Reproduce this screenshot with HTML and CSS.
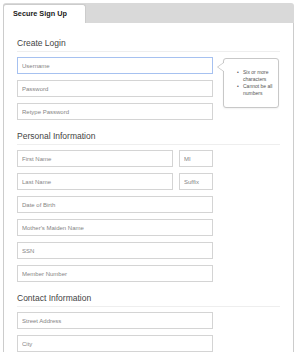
FILE: index.html
```html
<!DOCTYPE html>
<html lang="en">
<head>
    <meta charset="UTF-8">
    <meta name="viewport" content="width=device-width, initial-scale=1.0">
    <title>Secure Sign Up</title>
    <link rel="stylesheet" href="styles.css">
</head>
<body>
    <div class="signup">
        <div class="tabbar">
            <div class="tab">Secure Sign Up</div>
        </div>
        <form class="panel">
            <section class="group">
                <h2>Create Login</h2>
                <div class="field">
                    <input type="text" class="focused" placeholder="Username">
                    <div class="hint">
                        <ul>
                            <li>Six or more characters</li>
                            <li>Cannot be all numbers</li>
                        </ul>
                    </div>
                </div>
                <input type="password" placeholder="Password">
                <input type="password" placeholder="Retype Password">
            </section>

            <section class="group">
                <h2>Personal Information</h2>
                <div class="row">
                    <input type="text" placeholder="First Name">
                    <input type="text" class="short" placeholder="MI">
                </div>
                <div class="row">
                    <input type="text" placeholder="Last Name">
                    <input type="text" class="short" placeholder="Suffix">
                </div>
                <input type="text" placeholder="Date of Birth">
                <input type="text" placeholder="Mother's Maiden Name">
                <input type="text" placeholder="SSN">
                <input type="text" placeholder="Member Number">
            </section>

            <section class="group">
                <h2>Contact Information</h2>
                <input type="text" placeholder="Street Address">
                <input type="text" placeholder="City">
            </section>
        </form>
    </div>
</body>
</html>
```

FILE: styles.css
```css
* {
    box-sizing: border-box;
}
html, body {
    overflow: hidden;
}
body {
    font-family: 'Liberation Sans', Arial, sans-serif;
    background: #fff;
    margin: 0;
}
.signup {
    width: 291px;
    margin: 3px 0 0 3px;
}
.tabbar {
    display: flex;
    height: 20px;
    padding-top: 1px;
    background: #d9d9d9;
    border-radius: 3px 3px 0 0;
}
.tab {
    width: 83px;
    background: #fff;
    border: 1px solid #cccccc;
    border-bottom: none;
    border-radius: 3px 3px 0 0;
    padding-left: 9px;
    font-size: 7.3px;
    font-weight: 700;
    line-height: 18px;
    color: #1a1a1a;
}
.panel {
    border: 1px solid #cccccc;
    border-top: none;
    padding: 4px 13px 20px 13px;
    margin: 0;
}
.group h2 {
    margin: 10px 0 5px 0;
    padding-bottom: 2px;
    border-bottom: 1px solid #eeeeee;
    font-size: 8.5px;
    font-weight: 400;
    line-height: 12px;
    color: #444;
}
.group input {
    display: block;
    width: 196px;
    height: 17px;
    margin: 0 0 6px 0;
    padding: 0 4px;
    border: 1px solid #d4d4d4;
    border-radius: 0;
    background: #fff;
    font-family: inherit;
    font-size: 6px;
    color: #333;
    outline: none;
}
.group input::placeholder {
    color: #858585;
}
.group input.focused {
    border-color: #a6c1f0;
}
.field {
    position: relative;
}
.row {
    display: flex;
    gap: 6px;
    width: 196px;
}
.row input {
    flex: 1;
    width: auto;
    min-width: 0;
}
.row input.short {
    flex: none;
    width: 34px;
}
.hint {
    position: absolute;
    left: 206px;
    top: 1px;
    width: 56px;
    padding: 10px 2px 10px 13px;
    background: #fff;
    border: 1px solid #c8c8c8;
    border-radius: 3px;
    box-shadow: 0 1px 2px rgba(0,0,0,0.06);
}
.hint::before,
.hint::after {
    content: "";
    position: absolute;
    top: 3px;
    width: 0;
    height: 0;
    border-style: solid;
    border-width: 5px 7px 5px 0;
}
.hint::before {
    left: -7px;
    border-color: transparent #c0c0c0 transparent transparent;
}
.hint::after {
    left: -6px;
    border-color: transparent #fff transparent transparent;
}
.hint ul {
    list-style: none;
    margin: 0;
    padding: 0;
}
.hint li {
    position: relative;
    padding-left: 6px;
    font-size: 5px;
    line-height: 7px;
    color: #555;
}
.hint li::before {
    content: "\2022";
    position: absolute;
    left: 0;
}
```
